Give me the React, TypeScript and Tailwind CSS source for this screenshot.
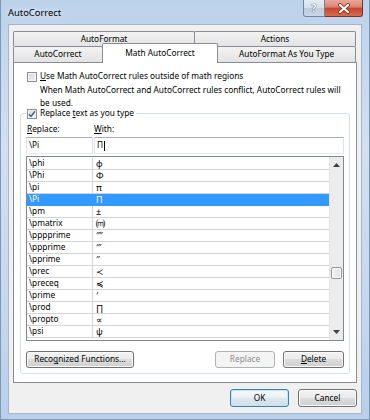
import React from "react";

function Check({ checked }: { checked?: boolean }) {
  return (
    <span className="w-[10px] h-[10px] shrink-0 border border-[#8e8f8f] bg-[linear-gradient(135deg,#d2d6dc_0%,#f4f4f4_100%)] shadow-[inset_0_0_0_1px_#f4f4f4] flex items-center justify-center">
      {checked && (
        <svg width="8" height="8" viewBox="0 0 8 8">
          <path d="M1 4.2 L3 6.4 L7 1.2" fill="none" stroke="#3f5a8a" strokeWidth="1.4" />
        </svg>
      )}
    </span>
  );
}

function Btn({
  children,
  w,
  h = "h-[17px]",
  disabled,
  def,
}: {
  children: React.ReactNode;
  w: string;
  h?: string;
  disabled?: boolean;
  def?: boolean;
}) {
  const base = `${w} ${h} shrink-0 rounded-[3px] border flex items-center justify-center`;
  if (disabled)
    return (
      <div className={`${base} border-[#adb2b5] bg-[#f4f4f4] text-[#8d8d8d]`}>{children}</div>
    );
  if (def)
    return (
      <div
        className={`${base} border-[#3c7fb1] bg-[linear-gradient(#f3f8fb_0%,#eaf1f6_50%,#dde7ef_50%,#d3dee8_100%)] shadow-[inset_0_0_0_1px_#c4e5f6]`}
      >
        {children}
      </div>
    );
  return (
    <div
      className={`${base} border-[#707070] bg-[linear-gradient(#f2f2f2_0%,#ebebeb_50%,#dddddd_50%,#cfcfcf_100%)] shadow-[inset_0_0_0_1px_#fbfbfb]`}
    >
      {children}
    </div>
  );
}

const rows: [string, string][] = [
  ["\\phi", "ϕ"],
  ["\\Phi", "Φ"],
  ["\\pi", "π"],
  ["\\Pi", "Π"],
  ["\\pm", "±"],
  ["\\pmatrix", "⒨"],
  ["\\pppprime", "⁗"],
  ["\\ppprime", "‴"],
  ["\\pprime", "″"],
  ["\\prec", "≺"],
  ["\\preceq", "≼"],
  ["\\prime", "′"],
  ["\\prod", "∏"],
  ["\\propto", "∝"],
  ["\\psi", "ψ"],
];

export default function App() {
  const tabBase =
    "h-full flex items-center justify-center border-t border-l border-r border-[#898c95] rounded-t-[2px] bg-[linear-gradient(#f3f3f3,#e3e3e3)]";
  return (
    <div className="w-[370px] h-[420px] overflow-hidden bg-[linear-gradient(180deg,#bcd2eb_0%,#d2e0f0_35%,#c6d8ed_70%,#b9cfe9_100%)] shadow-[inset_1px_0_0_#7d97b8,inset_-1px_0_0_#7d97b8,inset_0_-1px_0_#7d97b8] font-['Noto_Sans','Liberation_Sans',sans-serif] text-[8.3px] text-black leading-none select-none">
      {/* Title bar */}
      <div className="h-[24px] flex items-start">
        <div className="ml-[8px] mt-[8px] text-[9.4px] [text-shadow:0_0_6px_#ffffff]">AutoCorrect</div>
        <div className="ml-auto mr-[7px] flex">
          <div className="w-[22px] h-[17px] border border-[#6f84a0] border-t-0 rounded-bl-[3px] bg-[linear-gradient(#e4ebf4_0%,#d3dfec_50%,#bccbde_50%,#c9d7e8_100%)] flex items-center justify-center text-[10px] font-bold text-white [text-shadow:0_0_1px_#40506a,0_0_1px_#40506a]">
            ?
          </div>
          <div className="w-[38px] h-[17px] border border-[#7d3328] border-t-0 border-l-0 rounded-br-[3px] bg-[linear-gradient(#eaa99b_0%,#dc826e_45%,#c8452c_50%,#d66a4f_100%)] flex items-center justify-center">
            <svg width="14" height="11" viewBox="0 0 14 11">
              <path d="M3 2 L11 9 M11 2 L3 9" stroke="#6b2418" strokeWidth="3.6" strokeLinecap="round" />
              <path d="M3 2 L11 9 M11 2 L3 9" stroke="#ffffff" strokeWidth="2.2" strokeLinecap="round" />
            </svg>
          </div>
        </div>
      </div>

      {/* Client area */}
      <div className="mx-[8px] h-[390px] border border-[#a3b6cc] bg-[#f0f0f0] flex flex-col">
        {/* Tab control */}
        <div className="ml-[4px] mt-[6px] w-[344px] flex flex-col">
          <div className="h-[15px] w-[343px] flex">
            <div className={`${tabBase} w-[182px]`}>AutoFormat</div>
            <div className={`${tabBase} w-[162px] -ml-px`}>Actions</div>
          </div>
          <div className="h-[16px] w-[343px] flex items-start">
            <div className={`${tabBase} w-[90px]`}>AutoCorrect</div>
            <div className="relative z-10 -mt-[3px] -ml-px h-[20px] w-[117px] flex items-center justify-center border-t border-l border-r border-[#898c95] rounded-t-[2px] bg-white">
              Math AutoCorrect
            </div>
            <div className={`${tabBase} w-[139px] -ml-px`}>AutoFormat As You Type</div>
          </div>

          {/* Panel */}
          <div className="h-[321px] w-[344px] border border-[#898c95] bg-white flex flex-col">
            <div className="mt-[7px] ml-[13px] h-[13px] flex items-center gap-[3px]">
              <Check />
              <span>
                <span className="underline">U</span>se Math AutoCorrect rules outside of math regions
              </span>
            </div>
            <div className="ml-[26px] leading-[13px] whitespace-nowrap">
              When Math AutoCorrect and AutoCorrect rules conflict, AutoCorrect rules will
              <br />
              be used.
            </div>

            {/* Group box */}
            <div className="mt-[4px] ml-[6px] w-[330px] h-[261px] border border-[#d5dfe5] rounded-[3px] px-[5px] flex flex-col">
              <div className="-mt-[7px] h-[13px] flex">
                <div className="bg-white flex items-center gap-[3px] pr-[2px] pl-[1px]">
                  <Check checked />
                  <span>
                    Replace <span className="underline">t</span>ext as you type
                  </span>
                </div>
              </div>
              <div className="mt-[3px] h-[13px] flex items-center">
                <div className="w-[68px] pl-[1px]">
                  <span className="underline">R</span>eplace:
                </div>
                <div>
                  <span className="underline">W</span>ith:
                </div>
              </div>
              <div className="mt-[1px] h-[17px] flex gap-[1px]">
                <div className="w-[67px] h-full border border-[#abadb3] border-l-[#e2e3ea] border-r-[#e2e3ea] border-b-[#e3e9ef] flex items-center pl-[2px]">
                  \Pi
                </div>
                <div className="w-[250px] h-full border border-[#abadb3] border-l-[#e2e3ea] border-r-[#e2e3ea] border-b-[#e3e9ef] flex items-center pl-[2px]">
                  Π<span className="w-px h-[10px] bg-black ml-[1px]" />
                </div>
              </div>

              {/* List */}
              <div className="mt-[2px] h-[185px] w-[318px] border border-[#828790] flex">
                <div className="w-[302px] pt-[1px] flex flex-col">
                  {rows.map(([k, v], i) => {
                    const sel = i === 3;
                    return (
                      <div
                        key={k}
                        className={`h-[12px] shrink-0 flex border-b ${
                          sel ? "bg-[#3399ff] text-white border-[#3399ff]" : "border-[#d4d4d4]"
                        }`}
                      >
                        <div
                          className={`w-[66px] pl-[2px] flex items-center border-r ${
                            sel ? "border-[#3399ff]" : "border-[#d4d4d4]"
                          }`}
                        >
                          {k}
                        </div>
                        <div className="pl-[3px] flex items-center text-[9px]">{v}</div>
                      </div>
                    );
                  })}
                </div>
                <div className="w-[14px] border-l border-[#e3e3e3] bg-[#ececec] flex flex-col">
                  <div className="h-[16px] flex items-center justify-center">
                    <svg width="7" height="4" viewBox="0 0 7 4">
                      <path d="M0 4 L3.5 0 L7 4 Z" fill="#404040" />
                    </svg>
                  </div>
                  <div className="flex-1 flex justify-center">
                    <div className="mt-[94px] w-[11px] h-[12px] rounded-[2px] border border-[#979797] bg-[linear-gradient(90deg,#f3f3f3,#e2e2e2)] shadow-[inset_0_0_0_1px_#fcfcfc]" />
                  </div>
                  <div className="h-[16px] flex items-center justify-center">
                    <svg width="7" height="4" viewBox="0 0 7 4">
                      <path d="M0 0 L7 0 L3.5 4 Z" fill="#404040" />
                    </svg>
                  </div>
                </div>
              </div>

              {/* Buttons */}
              <div className="mt-[10px] flex">
                <Btn w="w-[108px]">
                  <span>
                    Reco<span className="underline">g</span>nized Functions...
                  </span>
                </Btn>
                <div className="ml-auto flex gap-[8px]">
                  <Btn w="w-[60px]" disabled>
                    Replace
                  </Btn>
                  <Btn w="w-[61px]">
                    <span>
                      <span className="underline">D</span>elete
                    </span>
                  </Btn>
                </div>
              </div>
            </div>
          </div>
        </div>

        {/* OK / Cancel */}
        <div className="mt-[6px] pr-[4px] flex justify-end gap-[9px]">
          <Btn w="w-[59px]" h="h-[18px]" def>
            OK
          </Btn>
          <Btn w="w-[59px]" h="h-[18px]">
            Cancel
          </Btn>
        </div>
      </div>
    </div>
  );
}
